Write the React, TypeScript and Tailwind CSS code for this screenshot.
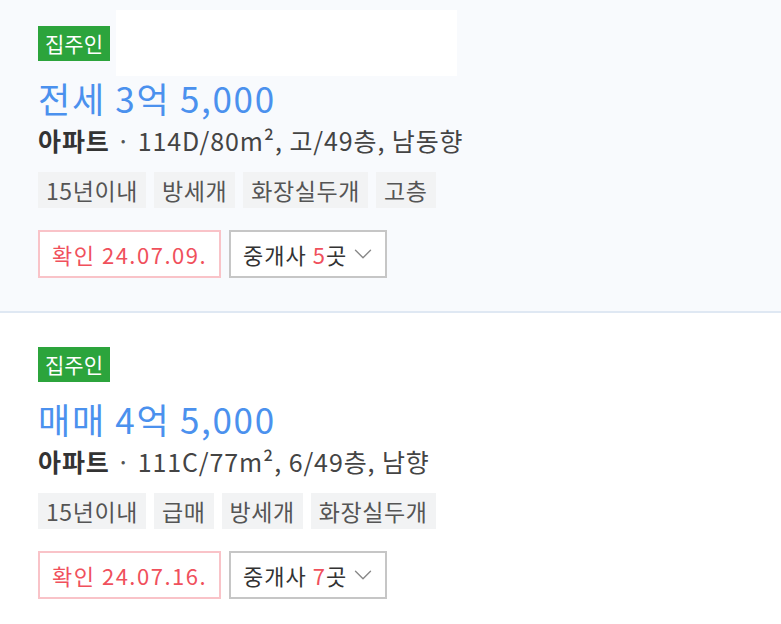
import { ChevronDown } from 'lucide-react';

type Listing = {
  deal: string;
  price: string;
  spec: string;
  tags: string[];
  confirmed: string;
  agents: number;
};

const listings: Listing[] = [
  {
    deal: '전세',
    price: '3억 5,000',
    spec: '114D/80m², 고/49층, 남동향',
    tags: ['15년이내', '방세개', '화장실두개', '고층'],
    confirmed: '24.07.09.',
    agents: 5,
  },
  {
    deal: '매매',
    price: '4억 5,000',
    spec: '111C/77m², 6/49층, 남향',
    tags: ['15년이내', '급매', '방세개', '화장실두개'],
    confirmed: '24.07.16.',
    agents: 7,
  },
];

function ListingItem({ item, highlighted }: { item: Listing; highlighted: boolean }) {
  return (
    <div
      className={`relative px-[38px] pb-[33px] ${
        highlighted ? 'bg-[#f8fafd] pt-[26px] border-b-2 border-[#dfe8f3]' : 'bg-white pt-[34px]'
      }`}
    >
      {highlighted && <div className="absolute left-[116px] top-[10px] w-[341px] h-[66px] bg-white" />}
      <div className="flex">
        <span className="h-[35px] px-[7px] flex items-center bg-[#2ca43c] text-white text-[21px] leading-none">
          집주인
        </span>
      </div>
      <div className="mt-[16px] h-[40px] flex items-center text-[35px] leading-none tracking-[1.7px] text-[#4b91ee]">
        {item.deal} {item.price}
      </div>
      <div className="mt-[9px] h-[30px] flex items-center whitespace-pre text-[25px] tracking-[0.9px] text-[#444]">
        <span className="font-bold text-[#333]">아파트</span>
        <span className="text-[#555]"> · </span>
        <span>{item.spec}</span>
      </div>
      <div className="mt-[16px] flex gap-[8px]">
        {item.tags.map((t) => (
          <span
            key={t}
            className="h-[36px] px-[8px] flex items-center bg-[#f2f3f4] text-[23px] tracking-[0.6px] text-[#555]"
          >
            {t}
          </span>
        ))}
      </div>
      <div className="mt-[22px] flex gap-[8px]">
        <div className="h-[48px] px-[12px] flex items-center border-2 border-[#f9c3c8] bg-white text-[22px] tracking-[1.5px] text-[#f0505c]">
          확인 {item.confirmed}
        </div>
        <button className="h-[48px] pl-[12px] pr-[7px] flex items-center gap-[1px] border-2 border-[#c6c6c6] bg-white text-[22px] tracking-[1px] text-[#333]">
          <span>
            중개사 <span className="text-[#f0505c]">{item.agents}</span>곳
          </span>
          <ChevronDown size={30} strokeWidth={1.1} className="text-[#888]" />
        </button>
      </div>
    </div>
  );
}

export default function App() {
  return (
    <div
      className="w-[781px] h-[624px] overflow-hidden bg-white"
      style={{ fontFamily: '"Noto Sans CJK KR", "Noto Sans", sans-serif' }}
    >
      {listings.map((l, i) => (
        <ListingItem key={i} item={l} highlighted={i === 0} />
      ))}
    </div>
  );
}
